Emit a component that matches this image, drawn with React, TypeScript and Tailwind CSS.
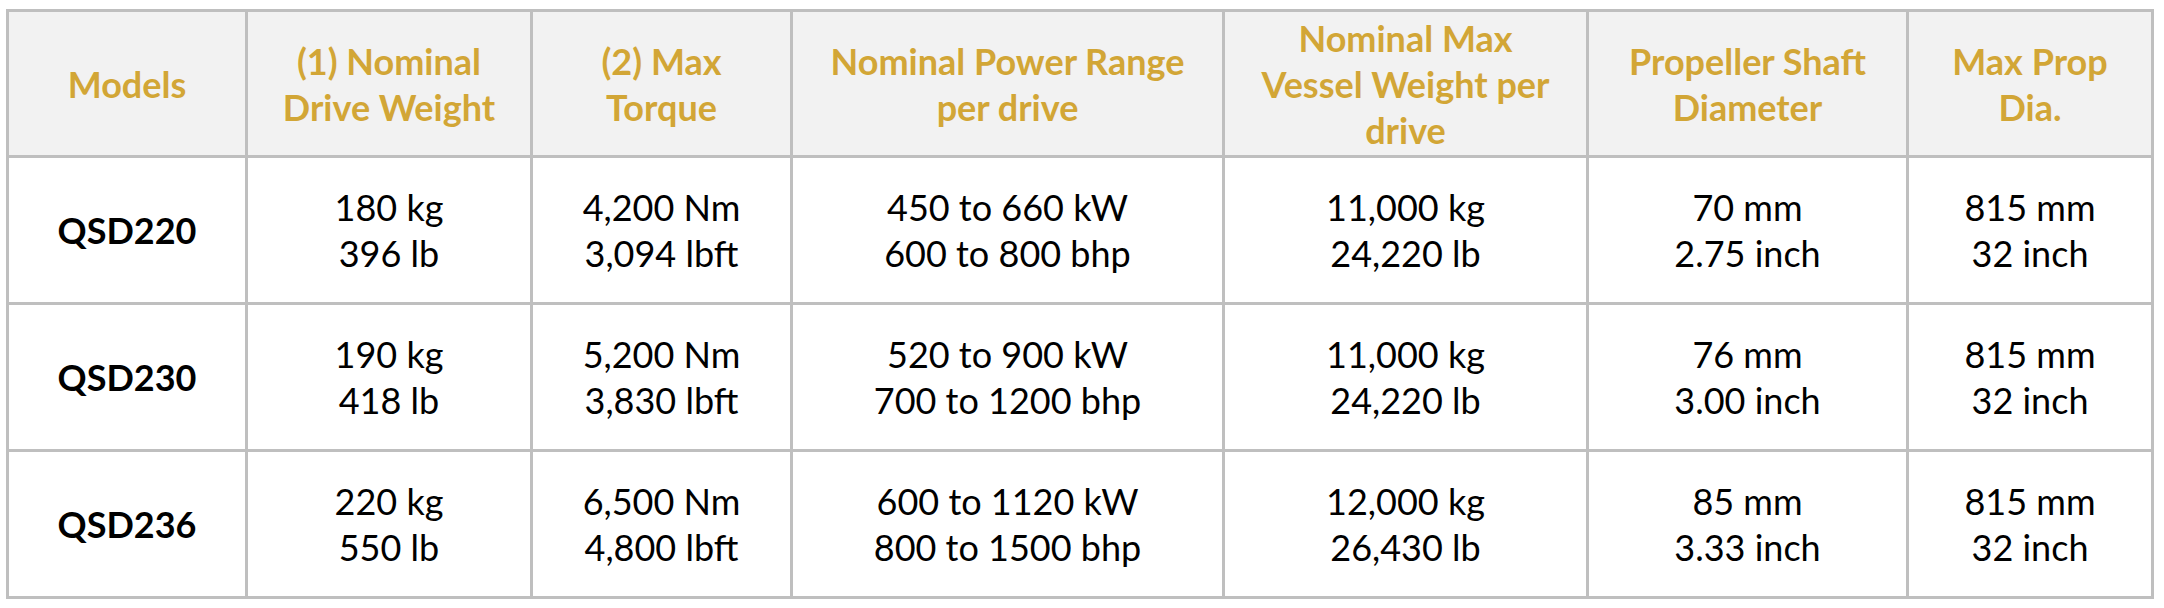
import React from "react";

const head: string[][] = [
  ["Models"],
  ["(1) Nominal", "Drive Weight"],
  ["(2) Max", "Torque"],
  ["Nominal Power Range", "per drive"],
  ["Nominal Max", "Vessel Weight per", "drive"],
  ["Propeller Shaft", "Diameter"],
  ["Max Prop", "Dia."],
];

const rows: { model: string; cells: string[][] }[] = [
  {
    model: "QSD220",
    cells: [
      ["180 kg", "396 lb"],
      ["4,200 Nm", "3,094 lbft"],
      ["450 to 660 kW", "600 to 800 bhp"],
      ["11,000 kg", "24,220 lb"],
      ["70 mm", "2.75 inch"],
      ["815 mm", "32 inch"],
    ],
  },
  {
    model: "QSD230",
    cells: [
      ["190 kg", "418 lb"],
      ["5,200 Nm", "3,830 lbft"],
      ["520 to 900 kW", "700 to 1200 bhp"],
      ["11,000 kg", "24,220 lb"],
      ["76 mm", "3.00 inch"],
      ["815 mm", "32 inch"],
    ],
  },
  {
    model: "QSD236",
    cells: [
      ["220 kg", "550 lb"],
      ["6,500 Nm", "4,800 lbft"],
      ["600 to 1120 kW", "800 to 1500 bhp"],
      ["12,000 kg", "26,430 lb"],
      ["85 mm", "3.33 inch"],
      ["815 mm", "32 inch"],
    ],
  },
];

function Lines({ lines }: { lines: string[] }) {
  return (
    <div className="flex flex-col items-center">
      {lines.map((l, i) => (
        <span key={i} className="whitespace-nowrap">
          {l}
        </span>
      ))}
    </div>
  );
}

export default function App() {
  return (
    <div className="w-[2164px] h-[608px] bg-white pt-[9px] pl-[6px] font-['Lato',sans-serif] text-[36px] leading-[46px]">
      <div className="grid w-max grid-cols-[239px_285px_260px_432px_364px_320px_245px] border-l-[3px] border-t-[3px] border-[#bfbfbf]">
        {head.map((h, i) => (
          <div
            key={"h" + i}
            className="flex h-[146px] items-center justify-center border-r-[3px] border-b-[3px] border-[#bfbfbf] bg-[#f2f2f2] font-bold text-[#d2a636]"
          >
            <Lines lines={h} />
          </div>
        ))}
        {rows.map((r) => (
          <React.Fragment key={r.model}>
            <div className="flex h-[147px] items-center justify-center border-r-[3px] border-b-[3px] border-[#bfbfbf] font-bold text-black">
              {r.model}
            </div>
            {r.cells.map((c, j) => (
              <div
                key={r.model + j}
                className="flex h-[147px] items-center justify-center border-r-[3px] border-b-[3px] border-[#bfbfbf] text-black"
              >
                <Lines lines={c} />
              </div>
            ))}
          </React.Fragment>
        ))}
      </div>
    </div>
  );
}
